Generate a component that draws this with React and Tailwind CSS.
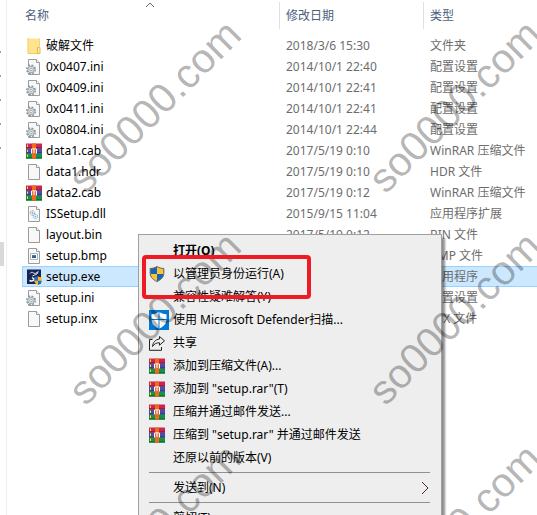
import React from 'react';

const FolderIcon = () => (
    <svg viewBox="0 0 16 16" className="w-4 h-4">
        <path d="M2 .5h11.500v14.500H2z" fill="#ffe48f" />
        <path d="M2 0v15.500h10.500" fill="none" stroke="#f0cb5c" />
        <path d="M11.500 9.500h2.500v6h-2.500z" fill="#ffeeb0" stroke="#e6b93f" />
        <path d="M13.500.5v9" stroke="#f3d574" />
    </svg>
);

const PageIcon = ({ children }) => (
    <svg viewBox="0 0 16 16" className="w-4 h-4">
        <path d="M2.500.5h8l3 3v12h-11z" fill="#f8f8f8" stroke="#9b9b9b" />
        <path d="M10.500.5v3h3" fill="#fff" stroke="#9b9b9b" />
        {children}
    </svg>
);

const IniIcon = () => (
    <PageIcon>
        <circle cx="5" cy="10.500" r="4.200" fill="#f4f6f7" stroke="#8b959b" strokeWidth="1.600" strokeDasharray="1.900 1.400" />
        <circle cx="5" cy="10.500" r="3.200" fill="#e2e7ea" stroke="#8b959b" strokeWidth=".8" />
        <circle cx="5" cy="10.500" r="1.300" fill="#fff" stroke="#8b959b" strokeWidth=".8" />
    </PageIcon>
);

const DllIcon = () => (
    <PageIcon>
        <circle cx="6.500" cy="7" r="2.200" fill="#eef1f3" stroke="#8b959b" strokeDasharray="1.300 .8" />
        <circle cx="6.500" cy="7" r=".8" fill="#8b959b" />
        <circle cx="9.500" cy="10.500" r="2.200" fill="#e3f2fb" stroke="#6fb0d6" strokeDasharray="1.300 .8" />
        <circle cx="9.500" cy="10.500" r=".8" fill="#6fb0d6" />
    </PageIcon>
);

const BmpIcon = () => (
    <PageIcon>
        <path d="M4.500 5.500h7v6h-7z" fill="#fff" stroke="#a8b4bf" />
        <path d="M6 7h4v3H6z" fill="#3c7fb8" />
        <path d="M6 9l2-1 2 1v1H6z" fill="#2b5580" />
    </PageIcon>
);

const ExeIcon = () => (
    <svg viewBox="0 0 16 16" className="w-4 h-4">
        <path d="M1 .5h14v14.500H1z" fill="#172554" />
        <path d="M4 4.500c1-1.500 2.500-1.500 3.500-.5 1.500.8 3 .5 4.500-1.500-.2 2-1.500 3.300-3.500 3.500L6.500 7" fill="none" stroke="#f1f4fa" />
        <path d="M3.500 11.500c2 .8 4 .3 5-1L6 8.500" fill="none" stroke="#f1f4fa" strokeWidth="1.500" />
        <path d="M12 7.500l3.700 1v3.200c0 2-1.500 3.300-3.700 4.200-2.200-.9-3.700-2.200-3.700-4.200V8.500z" fill="#fdbb2c" />
        <path d="M12 7.500v4.200H8.300V8.500zM12 11.700h3.700c0 2-1.500 3.300-3.700 4.200z" fill="#1c6fc4" />
    </svg>
);

const RarIcon = () => (
    <svg viewBox="0 0 16 15" className="w-4 h-4">
        <path d="M0 0h16v5H0z" fill="#cc2450" />
        <path d="M0 5h16v5H0z" fill="#4b4bb4" />
        <path d="M0 10h16v5H0z" fill="#149440" />
        <path d="M0 4h16v1H0z" fill="#77132c" />
        <path d="M0 9h16v1H0z" fill="#292a6e" />
        <path d="M0 14h16v1H0z" fill="#07562a" />
        <path d="M1.500 1v2.500M1.500 6v2.500M1.500 11v2.500" stroke="#ffd91f" />
        <path d="M6 0h4v15H6z" fill="#ef6a1c" />
        <path d="M5.500 10V5.500h5V10" fill="none" stroke="#fff" />
        <path d="M6 6h4v4H6z" fill="#e2703c" />
        <path d="M7.500 5h1v4.500h-1z" fill="#fff" />
    </svg>
);

const ShieldIcon = () => (
    <svg viewBox="0 0 16 16" className="w-4 h-4">
        <path d="M8 .5c2 1.300 4.200 1.900 6.800 2v4.800c0 4-3.200 6.700-6.800 8.200C4.400 14 1.200 11.300 1.200 7.300V2.500C3.800 2.400 6 1.800 8 .5z" fill="#ffc22e" />
        <path d="M8 .8V8H1.500V2.700C4 2.500 6 2 8 .8zM8 8h6.500c-.3 3.500-3 5.800-6.500 7.300z" fill="#1266bf" />
        <path d="M8 .5c2 1.300 4.200 1.900 6.800 2v4.800c0 4-3.200 6.700-6.800 8.200C4.400 14 1.200 11.300 1.200 7.300V2.500C3.800 2.400 6 1.800 8 .5z" fill="none" stroke="#56606b" />
    </svg>
);

const DefenderIcon = () => (
    <svg viewBox="0 0 20 20" className="w-5 h-5">
        <path d="M0 0h20v20H0z" fill="#0078d7" />
        <path d="M10 1.500c2 1.800 4.300 2.600 7.500 2.800v5.200c0 4.300-3 7.200-7.500 9.300-4.500-2.100-7.500-5-7.500-9.300V4.300C5.700 4.100 8 3.300 10 1.500z" fill="#fff" />
        <path d="M10 1v18M2 9.500h16" stroke="#0078d7" />
    </svg>
);

const ShareIcon = () => (
    <svg viewBox="0 0 16 16" className="w-4 h-4" fill="none" stroke="#222">
        <path d="M3.500 4.500h-3v10.800h12V12" />
        <path d="M10.500 1.500l5 4.300-5 4.400V7.800C7.500 7.600 5.300 8.800 3.500 11.500 4 7.300 6.300 4.500 10.500 4z" strokeLinejoin="round" />
    </svg>
);

const files = [
    { name: '破解文件', date: '2018/3/6 15:30', type: '文件夹', icon: FolderIcon },
    { name: '0x0407.ini', date: '2014/10/1 22:40', type: '配置设置', icon: IniIcon },
    { name: '0x0409.ini', date: '2014/10/1 22:41', type: '配置设置', icon: IniIcon },
    { name: '0x0411.ini', date: '2014/10/1 22:41', type: '配置设置', icon: IniIcon },
    { name: '0x0804.ini', date: '2014/10/1 22:44', type: '配置设置', icon: IniIcon },
    { name: 'data1.cab', date: '2017/5/19 0:10', type: 'WinRAR 压缩文件', icon: RarIcon },
    { name: 'data1.hdr', date: '2017/5/19 0:10', type: 'HDR 文件', icon: PageIcon },
    { name: 'data2.cab', date: '2017/5/19 0:12', type: 'WinRAR 压缩文件', icon: RarIcon },
    { name: 'ISSetup.dll', date: '2015/9/15 11:04', type: '应用程序扩展', icon: DllIcon },
    { name: 'layout.bin', date: '2017/5/19 0:12', type: 'BIN 文件', icon: PageIcon },
    { name: 'setup.bmp', date: '2017/5/19 0:12', type: 'BMP 文件', icon: BmpIcon },
    { name: 'setup.exe', date: '2017/5/19 0:12', type: '应用程序', icon: ExeIcon, selected: true },
    { name: 'setup.ini', date: '2017/5/19 0:12', type: '配置设置', icon: IniIcon },
    { name: 'setup.inx', date: '2017/5/19 0:12', type: 'INX 文件', icon: PageIcon },
];

const menuGroups = [
    [
        { label: '打开(O)', bold: true },
        { label: '以管理员身份运行(A)', icon: ShieldIcon, marked: true },
        { label: '兼容性疑难解答(Y)' },
        { label: '使用 Microsoft Defender扫描...', icon: DefenderIcon },
        { label: '共享', icon: ShareIcon },
        { label: '添加到压缩文件(A)...', icon: RarIcon },
        { label: '添加到 "setup.rar"(T)', icon: RarIcon },
        { label: '压缩并通过邮件发送...', icon: RarIcon },
        { label: '压缩到 "setup.rar" 并通过邮件发送', icon: RarIcon },
        { label: '还原以前的版本(V)' },
    ],
    [{ label: '发送到(N)', submenu: true }],
    [{ label: '剪切(T)' }],
];

const HeaderCell = ({ label, divider, sorted }) => (
    <th className="relative p-0 pb-[6px] pt-[2px] font-normal">
        <div className={`ml-px flex h-[27px] items-center ${divider ? 'border-l border-[#e0e0e0] pl-[6px]' : 'pl-[2px]'}`}>{label}</div>
        {sorted && (
            <svg viewBox="0 0 10 6" className="absolute left-[123px] top-[2px] h-[6px] w-[10px]" fill="none" stroke="#666">
                <path d="M1 5l4-4 4 4" />
            </svg>
        )}
    </th>
);

const FileRow = ({ name, date, type, icon: Icon, selected }) => {
    const edge = selected ? 'border-[#99d1ff] bg-[#cce8ff]' : 'border-transparent';
    return (
        <tr className="h-[21px]">
            <td className={`border-y border-l p-0 pl-[3px] text-black ${edge}`}>
                <div className="flex items-center gap-1">
                    <Icon />
                    <span>{name}</span>
                </div>
            </td>
            <td className={`border-y p-0 pl-2 ${edge}`}>{date}</td>
            <td className={`border-y p-0 pl-2 ${edge}`}>{type}</td>
        </tr>
    );
};

const MenuItem = ({ label, icon: Icon, bold, marked, submenu }) => (
    <button role="menuitem" className="relative flex h-[23px] w-full items-center pl-[10px] pr-3 text-left">
        <span className="flex w-6 shrink-0 items-center">{Icon && <Icon />}</span>
        <span className={bold ? 'font-bold' : ''}>{label}</span>
        {submenu && (
            <svg viewBox="0 0 8 14" className="ml-auto h-[14px] w-2" fill="none" stroke="#5c2030">
                <path d="M1 1l6 6-6 6" />
            </svg>
        )}
        {marked && <span className="absolute -top-[7px] left-[3px] z-10 h-11 w-[169px] rounded-sm border-4 border-[#ed1c24]" />}
    </button>
);

const ContextMenu = () => (
    <div role="menu" className="absolute left-[138px] top-[234px] w-[304px] border border-[#a0a0a0] bg-[#eeeeee] py-1 text-black shadow-[3px_4px_2px_#00000070]">
        {menuGroups.map((group, i) => (
            <React.Fragment key={i}>
                {i > 0 && <hr className="my-[3px] ml-[10px] mr-[11px] border-[#919191]" />}
                {group.map((item) => (
                    <MenuItem key={item.label} {...item} />
                ))}
            </React.Fragment>
        ))}
    </div>
);

const Watermarks = () => (
    <div aria-hidden="true" className="pointer-events-none absolute left-[5px] top-0 grid grid-cols-[300px_300px] auto-rows-[212px] font-['Liberation_Sans',Arial,sans-serif] text-[41px] text-black/30">
        {[0, 1, 2, 3, 4, 5].map((n) => (
            <div key={n} className="flex items-center justify-center">
                <span className="-rotate-45">so0000.com</span>
            </div>
        ))}
    </div>
);

const SideStrip = () => (
    <div className="relative w-[7px] shrink-0 border-r border-[#f0f0f0]">
        <div className="absolute left-0 top-[51px] flex flex-col gap-[22px]">
            {[0, 1, 2, 3, 4].map((n) => (
                <span key={n} className="h-[2px] w-px bg-[#a0a0a0]" />
            ))}
        </div>
        <div className="absolute left-0 top-[242px] h-6 w-1 bg-[#d9d9d9]" />
    </div>
);

const App = () => (
    <div className="relative flex h-screen overflow-hidden bg-white font-['Noto_Sans','Noto_Sans_CJK_SC',sans-serif] text-xs text-[#6d6d6d]">
        <SideStrip />
        <main className="flex-1 pl-[15px]">
            <table className="w-full table-fixed border-separate border-spacing-0 whitespace-nowrap">
                <colgroup>
                    <col className="w-[256px]" />
                    <col className="w-[144px]" />
                    <col />
                </colgroup>
                <thead className="text-left text-[#4c607a]">
                    <tr>
                        <HeaderCell label="名称" sorted />
                        <HeaderCell label="修改日期" divider />
                        <HeaderCell label="类型" divider />
                    </tr>
                </thead>
                <tbody>
                    {files.map((file) => (
                        <FileRow key={file.name} {...file} />
                    ))}
                </tbody>
            </table>
        </main>
        <ContextMenu />
        <Watermarks />
    </div>
);

export default App;
